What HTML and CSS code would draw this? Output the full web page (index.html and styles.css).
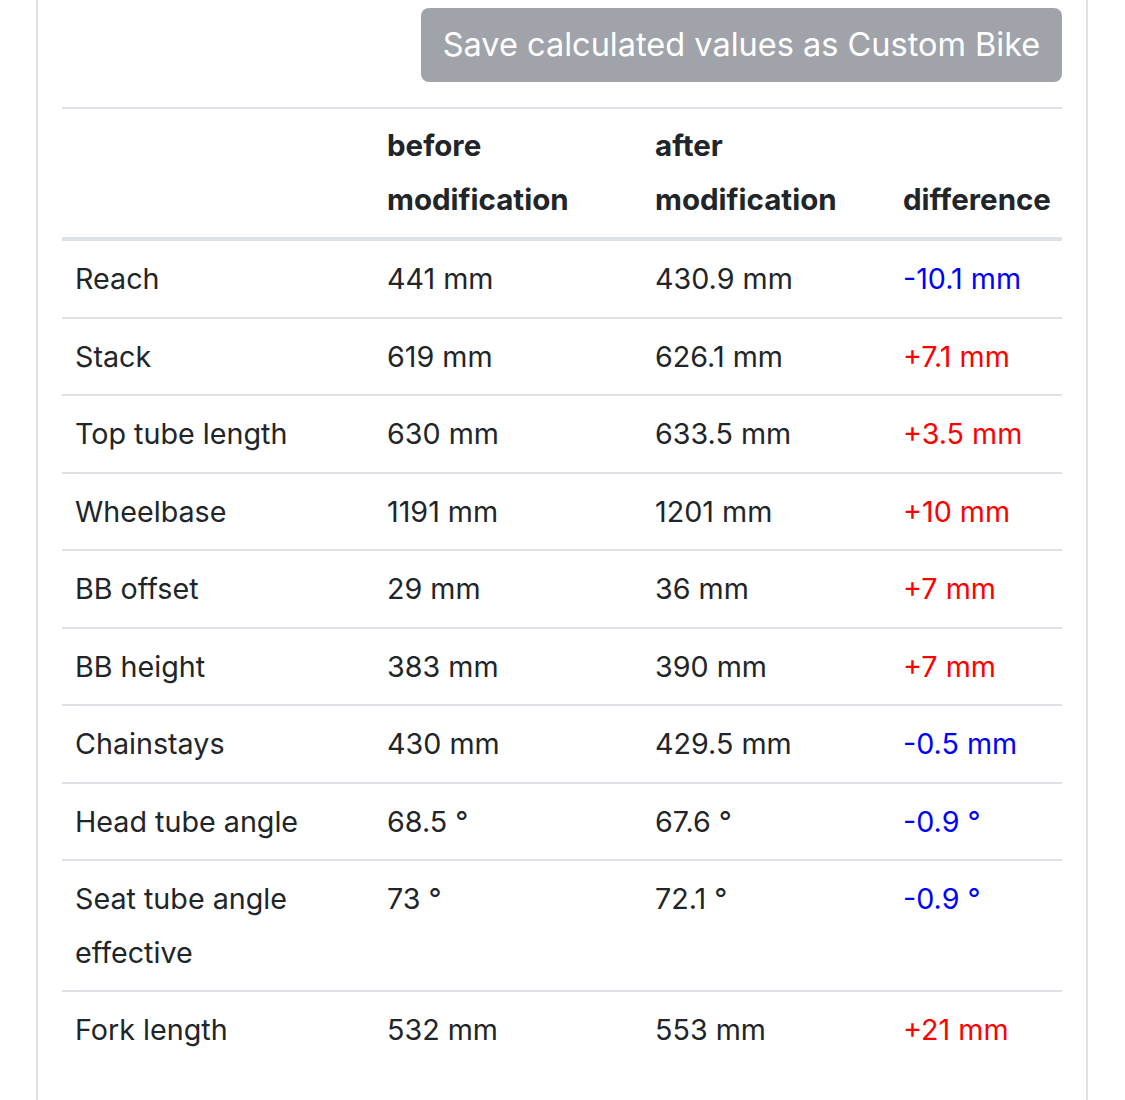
FILE: index.html
```html
<!DOCTYPE html>
<html lang="en">
<head>
<meta charset="utf-8">
<title>Geometry comparison</title>
<link rel="stylesheet" href="styles.css">
</head>
<body>
<div class="page">
  <div class="card">
    <div class="actions">
      <button class="btn" disabled>Save calculated values as Custom Bike</button>
    </div>
    <table class="geo">
      <colgroup>
        <col class="c1"><col class="c2"><col class="c3"><col class="c4">
      </colgroup>
      <thead>
        <tr><th></th><th>before modification</th><th>after modification</th><th>difference</th></tr>
      </thead>
      <tbody>
        <tr><td>Reach</td><td>441 mm</td><td>430.9 mm</td><td class="neg">-10.1 mm</td></tr>
        <tr><td>Stack</td><td>619 mm</td><td>626.1 mm</td><td class="pos">+7.1 mm</td></tr>
        <tr><td>Top tube length</td><td>630 mm</td><td>633.5 mm</td><td class="pos">+3.5 mm</td></tr>
        <tr><td>Wheelbase</td><td>1191 mm</td><td>1201 mm</td><td class="pos">+10 mm</td></tr>
        <tr><td>BB offset</td><td>29 mm</td><td>36 mm</td><td class="pos">+7 mm</td></tr>
        <tr><td>BB height</td><td>383 mm</td><td>390 mm</td><td class="pos">+7 mm</td></tr>
        <tr><td>Chainstays</td><td>430 mm</td><td>429.5 mm</td><td class="neg">-0.5 mm</td></tr>
        <tr><td>Head tube angle</td><td>68.5 °</td><td>67.6 °</td><td class="neg">-0.9 °</td></tr>
        <tr><td>Seat tube angle effective</td><td>73 °</td><td>72.1 °</td><td class="neg">-0.9 °</td></tr>
        <tr><td>Fork length</td><td>532 mm</td><td>553 mm</td><td class="pos">+21 mm</td></tr>
      </tbody>
    </table>
  </div>
</div>
</body>
</html>
```
FILE: styles.css
```css
html, body {
  margin: 0;
  padding: 0;
  background: #ffffff;
}
body {
  font-family: Inter, "Noto Sans", "Liberation Sans", sans-serif;
  color: #212529;
  font-size: 28.7px;
}
.page {
  padding: 0 37px 0 36px;
}
.card {
  border-left: 2px solid #dee2e6;
  border-right: 2px solid #dee2e6;
  padding: 8px 24px 40px 24px;
  min-height: 1100px;
  box-sizing: border-box;
}
.actions {
  display: flex;
  justify-content: flex-end;
  margin-bottom: 25px;
}
.btn {
  font-family: inherit;
  font-size: 32.5px;
  font-weight: 400;
  color: #ffffff;
  background: #a0a4aa;
  border: none;
  border-radius: 8px;
  height: 74px;
  width: 641px;
  padding: 0;
  line-height: 74px;
  white-space: nowrap;
}
.geo {
  width: 1000px;
  border-collapse: collapse;
  table-layout: fixed;
}
.c1 { width: 313px; }
.c2 { width: 268px; }
.c3 { width: 248px; }
.c4 { width: 171px; }
.geo th, .geo td {
  text-align: left;
  vertical-align: top;
  padding: 11px 10px 11px 12px;
  line-height: 53.5px;
  border-top: 2px solid #dee2e6;
}
.geo td:first-child { padding-left: 13px; }
.geo th {
  font-weight: 700;
  font-size: 29.5px;
  vertical-align: bottom;
  padding-top: 10px;
  border-bottom: 4px solid #dee2e6;
}
.geo tbody tr:first-child td { border-top: none; }
.neg { color: #0000ff; }
.pos { color: #ff0000; }
```
